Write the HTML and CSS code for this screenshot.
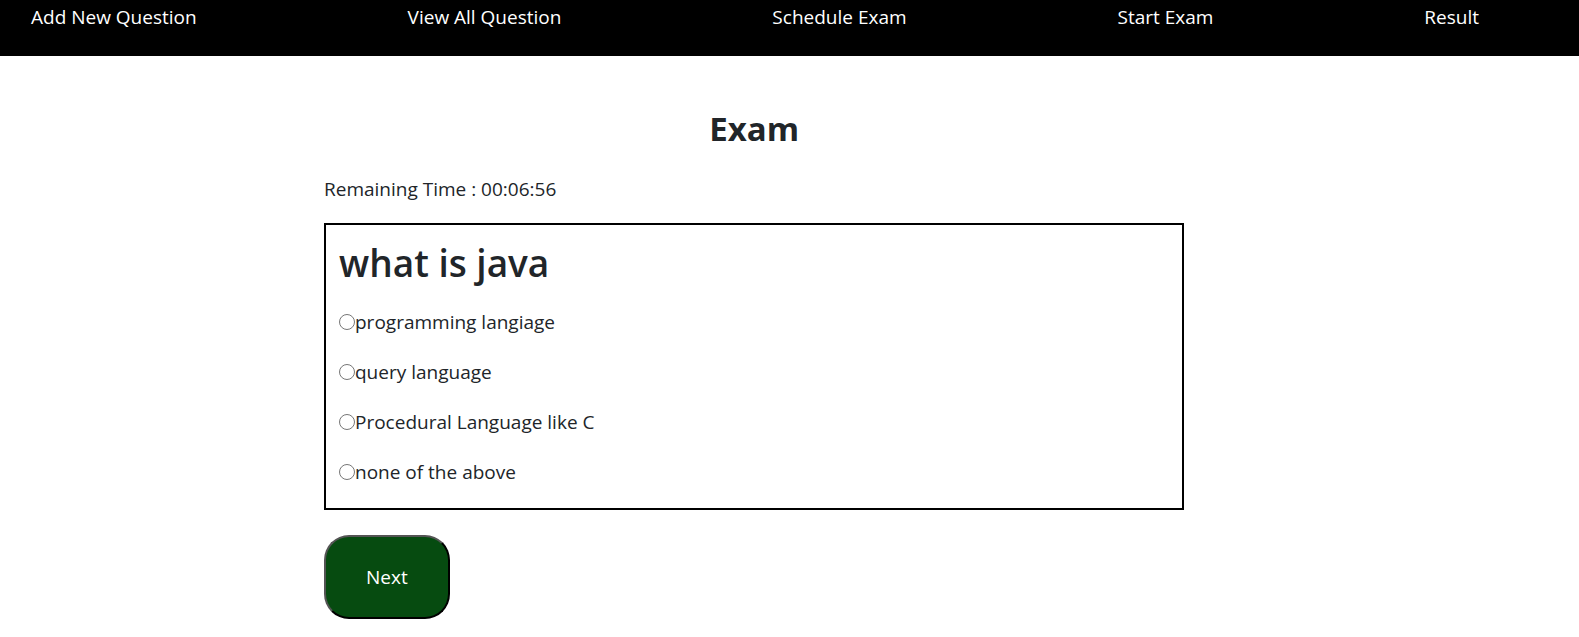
FILE: index.html
```html
<!DOCTYPE html>
<html lang="en">
<head>
<meta charset="utf-8">
<title>Exam</title>
<link rel="stylesheet" href="styles.css">
</head>
<body>
<nav class="navbar">
  <a href="#add">Add New Question</a>
  <a href="#view">View All Question</a>
  <a href="#schedule">Schedule Exam</a>
  <a href="#start">Start Exam</a>
  <a href="#result">Result</a>
</nav>
<main class="exam">
  <h1 class="exam-title">Exam</h1>
  <p class="timer">Remaining Time : 00:06:56</p>
  <form class="exam-form">
    <section class="question">
      <h2 class="question-title">what is java</h2>
      <label class="option"><input type="radio" name="answer"><span>programming langiage</span></label>
      <label class="option"><input type="radio" name="answer"><span>query language</span></label>
      <label class="option"><input type="radio" name="answer"><span>Procedural Language like C</span></label>
      <label class="option"><input type="radio" name="answer"><span>none of the above</span></label>
    </section>
    <button class="next" type="button">Next</button>
  </form>
</main>
</body>
</html>
```
FILE: styles.css
```css
* {
  box-sizing: border-box;
}

body {
  margin: 0;
  background: #fff;
  color: #212529;
  font-family: "Segoe UI", "Open Sans", "Noto Sans", sans-serif;
  font-size: 19px;
  line-height: 30px;
}

.navbar {
  display: flex;
  justify-content: space-between;
  padding: 2px 100px 24px 31px;
  background: #000;
}

.navbar a {
  color: #fff;
  text-decoration: none;
}

.exam {
  padding: 48px 25% 24px 324px;
}

.exam-title {
  margin: 0;
  font-size: 33px;
  line-height: 50px;
  font-weight: 700;
  text-align: center;
}

.timer {
  margin: 20px 0 19px;
}

.question {
  padding: 10px 13px 21px;
  border: 2px solid #000;
}

.question-title {
  margin: 0 0 16px;
  font-size: 37px;
  line-height: 56px;
  font-weight: 600;
}

.option {
  display: flex;
  align-items: center;
  width: fit-content;
  margin-bottom: 20px;
}

.option:last-child {
  margin-bottom: 0;
}

.option input {
  width: 16px;
  height: 16px;
  margin: 0;
}

.next {
  margin-top: 25px;
  padding: 25px 40px;
  border: 2px outset #000;
  border-radius: 25px;
  background: #064b10;
  color: #fff;
  font: inherit;
}
```
